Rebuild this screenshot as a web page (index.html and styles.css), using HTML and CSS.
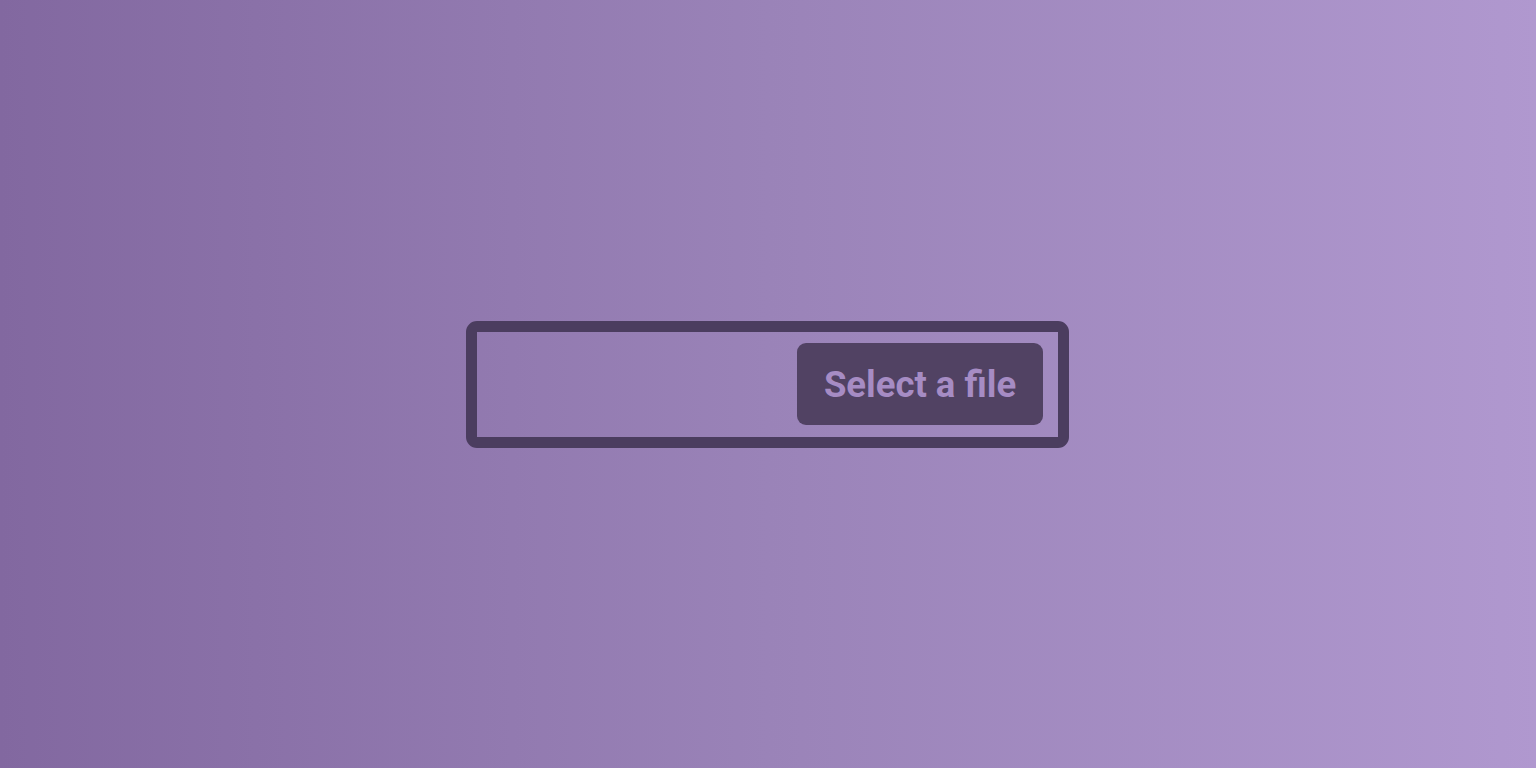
FILE: index.html
```html
<!DOCTYPE html>
<html>
<head>
<meta charset="utf-8">
<link rel="stylesheet" href="styles.css">
</head>
<body>
<div class="stage">
  <label class="file-field">
    <span class="file-name"></span>
    <span class="file-button">Select a file</span>
  </label>
</div>
</body>
</html>
```
FILE: styles.css
```css
html, body {
  margin: 0;
  height: 100%;
}
body {
  background: linear-gradient(90deg, #8268a0 0%, #9a83b8 50%, #b098cf 100%);
  font-family: Roboto, "Liberation Sans", sans-serif;
}
.stage {
  height: 100vh;
  display: flex;
  align-items: center;
  justify-content: center;
  padding-right: 1px;
}
.file-field {
  box-sizing: border-box;
  width: 603px;
  height: 127px;
  border: 11px solid #4b3d5f;
  border-radius: 11px;
  display: flex;
  align-items: center;
  justify-content: flex-end;
  padding: 0 15px 0 0;
}
.file-button {
  box-sizing: border-box;
  width: 246px;
  height: 82px;
  background: #514263;
  border-radius: 9px;
  color: #a68cc4;
  font-weight: 700;
  font-size: 36.5px;
  display: flex;
  align-items: center;
  justify-content: center;
}
```
